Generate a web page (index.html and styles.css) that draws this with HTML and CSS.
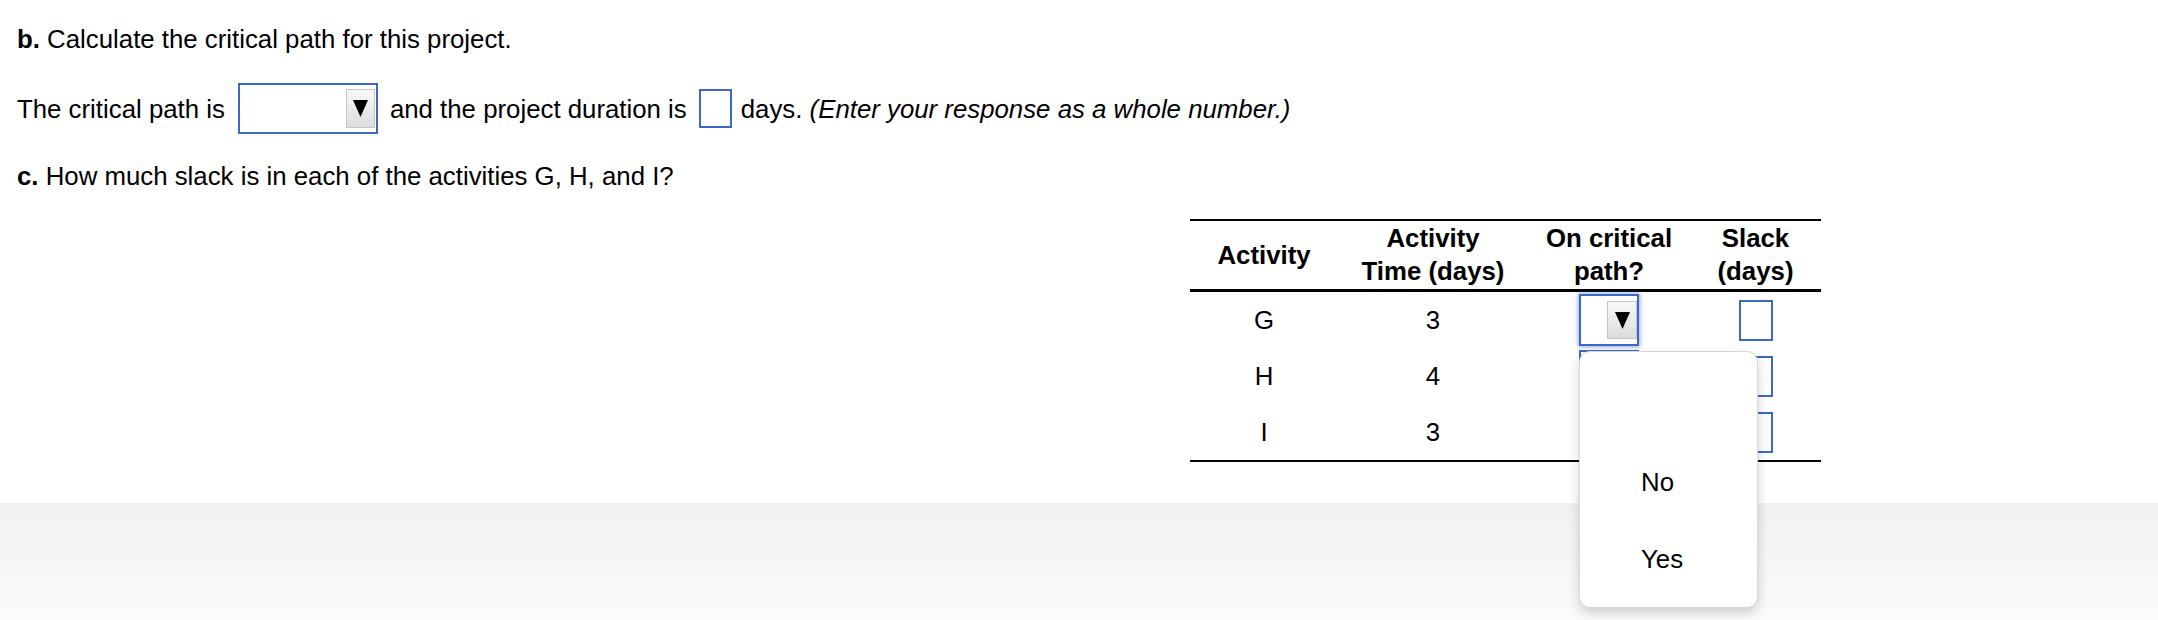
FILE: index.html
```html
<!DOCTYPE html>
<html lang="en">
<head>
<meta charset="utf-8">
<title>Critical path</title>
<link rel="stylesheet" href="styles.css">
</head>
<body>
<div class="content">
  <p class="q q-b"><b>b.</b> Calculate the critical path for this project.</p>
  <div class="q-line">
    <span>The critical path is</span>
    <span class="select select-wide">
      <span class="select-btn"><svg class="arrow" viewBox="0 0 15 17" width="15" height="17"><polygon points="0,0 15,0 7.5,17" fill="#000"/></svg></span>
    </span>
    <span class="after-select">and the project duration is</span>
    <span class="box box-duration"></span>
    <span class="after-box">days. <em>(Enter your response as a whole number.)</em></span>
  </div>
  <p class="q q-c"><b>c.</b> How much slack is in each of the activities G, H, and I?</p>

  <table class="slack-table">
    <thead>
      <tr>
        <th class="c1">Activity</th>
        <th class="c2">Activity<br>Time (days)</th>
        <th class="c3">On critical<br>path?</th>
        <th class="c4">Slack<br>(days)</th>
      </tr>
    </thead>
    <tbody>
      <tr>
        <td>G</td>
        <td>3</td>
        <td><span class="select select-cell focused"><span class="select-btn"><svg class="arrow" viewBox="0 0 15 17" width="15" height="17"><polygon points="0,0 15,0 7.5,17" fill="#000"/></svg></span></span></td>
        <td><span class="box box-slack"></span></td>
      </tr>
      <tr>
        <td>H</td>
        <td>4</td>
        <td><span class="select select-cell"><span class="select-btn"><svg class="arrow" viewBox="0 0 15 17" width="15" height="17"><polygon points="0,0 15,0 7.5,17" fill="#000"/></svg></span></span></td>
        <td><span class="box box-slack"></span></td>
      </tr>
      <tr>
        <td>I</td>
        <td>3</td>
        <td><span class="select select-cell"><span class="select-btn"><svg class="arrow" viewBox="0 0 15 17" width="15" height="17"><polygon points="0,0 15,0 7.5,17" fill="#000"/></svg></span></span></td>
        <td><span class="box box-slack"></span></td>
      </tr>
    </tbody>
  </table>
</div>
<div class="footer"></div>

<ul class="popup">
  <li class="opt">&nbsp;</li>
  <li class="opt">No</li>
  <li class="opt">Yes</li>
</ul>
</body>
</html>
```

FILE: styles.css
```css
html, body {
  margin: 0;
  padding: 0;
  background: #fff;
}
body {
  font-family: "Liberation Sans", Arial, Helvetica, sans-serif;
  font-size: 25.8px;
  color: #000;
  overflow: hidden;
}
.content {
  padding-left: 17px;
  padding-top: 24px;
}
.q {
  margin: 0;
  line-height: 30px;
}
.q-line {
  display: flex;
  align-items: center;
  margin-top: 29px;
  line-height: 30px;
  white-space: nowrap;
}
.q-c {
  margin-top: 27px;
}
.select {
  box-sizing: border-box;
  display: inline-flex;
  align-items: center;
  justify-content: flex-end;
  border: 2px solid #3d68c6;
  background: #fff;
}
.select-wide {
  width: 140px;
  height: 51px;
  margin-left: 13px;
  padding-right: 1px;
}
.select-btn {
  box-sizing: border-box;
  display: flex;
  align-items: center;
  justify-content: center;
  width: 29px;
  height: 39px;
  border: 1px solid #c6c6c6;
  background: linear-gradient(#f8f8f8, #dcdcdc);
}
.arrow {
  display: block;
}
.after-select {
  margin-left: 12px;
}
.box {
  box-sizing: border-box;
  display: inline-block;
  border: 2px solid #3d68c6;
  background: #fff;
}
.box-duration {
  width: 33px;
  height: 39px;
  margin-left: 12px;
}
.after-box {
  margin-left: 9px;
}
.slack-table {
  margin-top: 28px;
  margin-left: 1173px;
  width: 631px;
  table-layout: fixed;
  border-collapse: separate;
  border-spacing: 0;
  border-top: 2px solid #000;
  border-bottom: 2px solid #000;
}
.slack-table th {
  font-weight: bold;
  line-height: 33px;
  padding: 1px 0;
  border-bottom: 3px solid #000;
  text-align: center;
  vertical-align: middle;
}
.c1 { width: 148px; }
.c2 { width: 190px; }
.c3 { width: 162px; }
.c4 { width: 131px; }
.slack-table td {
  text-align: center;
  vertical-align: middle;
  padding: 2px 0;
  height: 52px;
  line-height: 30px;
}
.select-cell {
  width: 60px;
  height: 52px;
  vertical-align: middle;
}
.select-cell .select-btn {
  width: 30px;
  height: 38px;
}
.focused {
  box-shadow: 0 0 4px 1px rgba(61, 104, 198, 0.55);
}
.box-slack {
  width: 34px;
  height: 41px;
  vertical-align: middle;
}
.footer {
  margin-top: 41px;
  height: 117px;
  background: linear-gradient(#f1f1f1, #fbfbfb);
}
.popup {
  position: absolute;
  left: 1579px;
  top: 351px;
  box-sizing: border-box;
  width: 179px;
  height: 257px;
  margin: 0;
  padding: 15px 0 0 0;
  list-style: none;
  background: #fff;
  border: 1px solid #d8d8d8;
  border-radius: 11px;
  box-shadow: 0 5px 12px rgba(0, 0, 0, 0.18);
  z-index: 10;
}
.opt {
  height: 77px;
  line-height: 77px;
  padding-left: 61px;
}
```
